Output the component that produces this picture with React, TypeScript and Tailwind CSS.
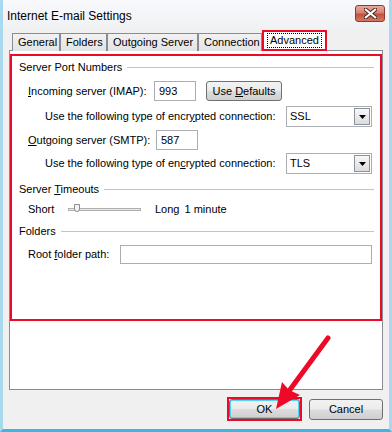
import React from 'react';

const btn =
  'flex items-center justify-center rounded-[3px] border border-[#707070] bg-[linear-gradient(#f2f2f2_0%,#ebebeb_48%,#dddddd_52%,#cfcfcf_100%)] text-black';

function GroupHeader({ children }: { children: React.ReactNode }) {
  return (
    <div className="flex items-center h-[14px] pl-[7px] pr-[6px]">
      <span>{children}</span>
      <div className="flex-1 ml-[5px] h-px bg-[#c4c4c4]" />
    </div>
  );
}

function Combo({ value }: { value: string }) {
  return (
    <div className="flex items-center w-[86px] h-[21px] border border-[#a9aeb5] bg-white">
      <span className="flex-1 pl-[3px]">{value}</span>
      <div className="mr-[1px] flex items-center justify-center w-[16px] h-[17px] border border-[#8a929c] bg-[linear-gradient(#f8f8f8,#dcdcdc)]">
        <svg width="7" height="4" viewBox="0 0 7 4">
          <path d="M0 0h7L3.5 4z" fill="#000" />
        </svg>
      </div>
    </div>
  );
}

function TextBox({ value, className }: { value?: string; className: string }) {
  return (
    <div className={`flex items-center border border-[#abadb3] bg-white pl-[4px] ${className}`}>
      {value}
    </div>
  );
}

const tabs = [
  { name: 'General', w: 'w-[48px]' },
  { name: 'Folders', w: 'w-[47px]' },
  { name: 'Outgoing Server', w: 'w-[91px]' },
  { name: 'Connection', w: 'w-[64px]' },
];

export default function App() {
  return (
    <div
      className="relative w-[392px] h-[432px] overflow-hidden bg-[#f0f0f0] text-[11px] text-black border-x-[3px] border-b-[3px] border-l-[#a9d9ef] border-r-[#a9d9ef] border-b-[#3cb6e3] flex flex-col"
      style={{ fontFamily: '"Liberation Sans", Arial, sans-serif' }}
    >
      {/* title bar */}
      <div className="flex items-start justify-between h-[30px] pl-[4px] pr-[4px] bg-[linear-gradient(#f7f9fc,#f0f1f3)]">
        <span className="mt-[7px] text-[12px]">Internet E-mail Settings</span>
        <div className="mt-[5px] flex items-center justify-center w-[30px] h-[17px] rounded-[3px] border border-[#8c3a31] bg-[linear-gradient(#e8a99c_0%,#d78273_45%,#c4503e_55%,#d27a5e_100%)]">
          <svg width="13" height="11" viewBox="0 0 13 11">
            <path
              d="M1 1L12 10M12 1L1 10"
              stroke="#4a2620"
              strokeWidth="4"
              strokeLinecap="square"
            />
            <path d="M1 1L12 10M12 1L1 10" stroke="#fff" strokeWidth="2.2" />
          </svg>
        </div>
      </div>

      {/* tabs */}
      <div className="flex items-end h-[21px] pl-[9px] relative z-10 -mb-px">
        {tabs.map((t) => (
          <div
            key={t.name}
            className={`${t.w} h-[18px] flex items-center pl-[5px] border border-b-0 border-[#898c95] bg-[linear-gradient(#f2f2f2,#e3e3e3)]`}
          >
            {t.name}
          </div>
        ))}
        <div className="w-[65px] h-[21px] border-2 border-[#ec0a28] flex items-center justify-center bg-white">
          <span className="px-[2px] border border-dotted border-black leading-[13px]">Advanced</span>
        </div>
      </div>

      {/* panel */}
      <div className="mx-[6px] h-[340px] border border-[#898c95] bg-white pt-[3px]">
        <div className="h-[267px] border-2 border-[#ec0a28] flex flex-col">
          <div className="mt-[4px]">
            <GroupHeader>Server Port Numbers</GroupHeader>
          </div>

          <div className="mt-[7px] flex items-center h-[20px] pl-[16px]">
            <span className="w-[126px]">
              <u>I</u>ncoming server (IMAP):
            </span>
            <TextBox value="993" className="w-[42px] h-[20px]" />
            <div className={`${btn} ml-[10px] w-[76px] h-[20px]`}>
              Use&nbsp;<u>D</u>efaults
            </div>
          </div>

          <div className="mt-[5px] flex items-center h-[21px] pl-[33px]">
            <span className="w-[241px]">
              Use the following type of encr<u>y</u>pted connection:
            </span>
            <Combo value="SSL" />
          </div>

          <div className="mt-[3px] flex items-center h-[20px] pl-[16px]">
            <span className="w-[128px]">
              <u>O</u>utgoing server (SMTP):
            </span>
            <TextBox value="587" className="w-[42px] h-[20px]" />
          </div>

          <div className="mt-[3px] flex items-center h-[21px] pl-[33px]">
            <span className="w-[241px]">
              Use the following type of en<u>c</u>rypted connection:
            </span>
            <Combo value="TLS" />
          </div>

          <div className="mt-[8px]">
            <GroupHeader>
              Server <u>T</u>imeouts
            </GroupHeader>
          </div>

          <div className="mt-[5px] flex items-center h-[16px] pl-[16px]">
            <span className="w-[40px]">Short</span>
            <div className="relative w-[73px] h-[10px] flex items-center">
              <div className="w-full h-[3px] border border-[#b0b0b0] bg-[#e7e7e7]" />
              <div className="absolute left-[6px] top-0 w-[6px] h-[8px] border border-[#8d8d8d] rounded-b-[3px] bg-[#f4f4f4]" />
            </div>
            <span className="ml-[14px]">Long</span>
            <span className="ml-[5px]">1 minute</span>
          </div>

          <div className="mt-[7px]">
            <GroupHeader>Folders</GroupHeader>
          </div>

          <div className="mt-[7px] flex items-center h-[19px] pl-[16px]">
            <span className="w-[92px]">
              Root <u>f</u>older path:
            </span>
            <TextBox className="w-[252px] h-[19px]" />
          </div>
        </div>
      </div>

      {/* buttons */}
      <div className="flex justify-end items-center mt-[7px] pr-[6px]">
        <div className="w-[75px] h-[24px] border-2 border-[#ec0a28] flex">
          <div className={`${btn} flex-1 border-[#3c7fb1] shadow-[inset_0_0_0_1px_#48d8fb]`}>OK</div>
        </div>
        <div className={`${btn} ml-[7px] w-[74px] h-[21px]`}>Cancel</div>
      </div>

      {/* annotation arrow */}
      <svg className="absolute left-[-3px] top-0 pointer-events-none" width="392" height="432">
        <path d="M328 338L289 391" stroke="#ee0a26" strokeWidth="5" strokeLinecap="round" />
        <path d="M276 409L282 382L289 390L300 395Z" fill="#ee0a26" />
      </svg>
    </div>
  );
}
